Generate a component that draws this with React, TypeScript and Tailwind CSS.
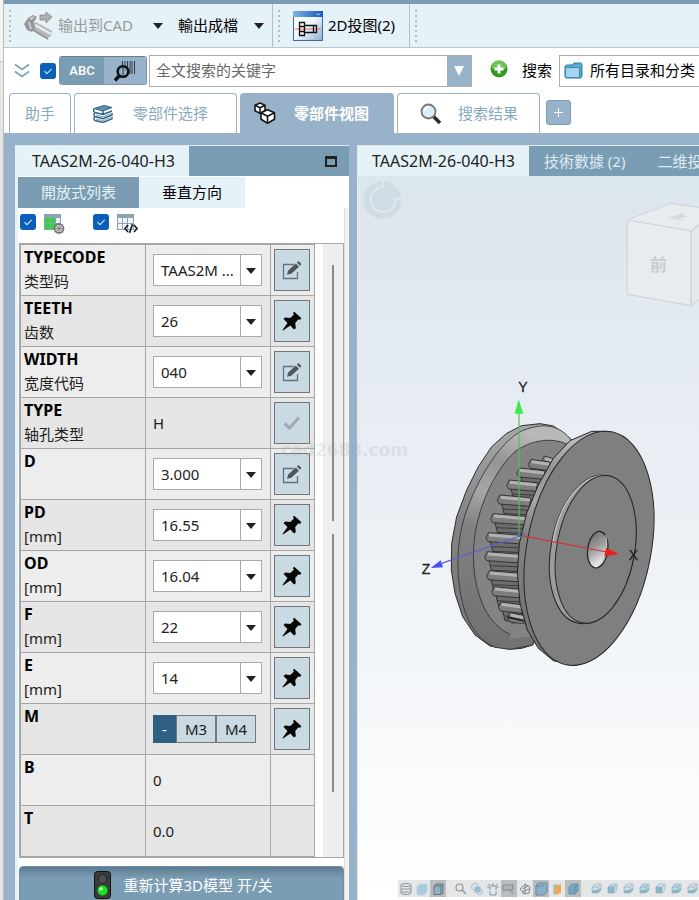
import React from "react";

type Action = "edit" | "pin" | "check";

interface Param {
  name: string;
  sub?: string;
  value: string;
  kind: "select" | "text" | "choice";
  action?: Action;
}

const params: Param[] = [
  { name: "TYPECODE", sub: "类型码", value: "TAAS2M ...", kind: "select", action: "edit" },
  { name: "TEETH", sub: "齿数", value: "26", kind: "select", action: "pin" },
  { name: "WIDTH", sub: "宽度代码", value: "040", kind: "select", action: "edit" },
  { name: "TYPE", sub: "轴孔类型", value: "H", kind: "text", action: "check" },
  { name: "D", value: "3.000", kind: "select", action: "edit" },
  { name: "PD", sub: "[mm]", value: "16.55", kind: "select", action: "pin" },
  { name: "OD", sub: "[mm]", value: "16.04", kind: "select", action: "pin" },
  { name: "F", sub: "[mm]", value: "22", kind: "select", action: "pin" },
  { name: "E", sub: "[mm]", value: "14", kind: "select", action: "pin" },
  { name: "M", value: "-", kind: "choice", action: "pin" },
  { name: "B", value: "0", kind: "text" },
  { name: "T", value: "0.0", kind: "text" },
];

function Handle() {
  return (
    <svg width="4" height="34" viewBox="0 0 4 34" className="shrink-0">
      {[1, 6, 11, 16, 21, 26, 31].map((y) => (
        <rect key={y} x="1" y={y} width="2" height="2" fill="#b3bcc4" />
      ))}
    </svg>
  );
}

function Caret({ color = "#222" }: { color?: string }) {
  return (
    <svg width="10" height="6" viewBox="0 0 10 6" className="shrink-0">
      <path d="M0 0h10L5 6z" fill={color} />
    </svg>
  );
}

function Check({ label }: { label: string }) {
  return (
    <label className="relative block h-4 w-4 shrink-0">
      <input
        type="checkbox"
        defaultChecked
        aria-label={label}
        className="block h-4 w-4 appearance-none rounded-[3px] bg-[#0a5fb8]"
      />
      <svg viewBox="0 0 16 16" className="pointer-events-none absolute inset-0 h-4 w-4">
        <path d="M4.500 8.200l2.400 2.400 4.800-4.800" fill="none" stroke="#cfe6f7" strokeWidth="1.100" />
      </svg>
    </label>
  );
}

function BoltIcon() {
  return (
    <svg width="30" height="30" viewBox="0 0 30 30" className="shrink-0">
      <path d="M8 14l4-3 16 9-1 5-3 2L9 19z" fill="#b5b8ba" />
      <path d="M11 14l16 9" stroke="#ececec" strokeWidth="2.500" />
      <path d="M9 19l15 9" stroke="#8d9092" strokeWidth="1.500" />
      <path d="M4 7l5-3 4 2-3 5 1 6-3 4-5-2-3-6z" fill="#96999c" />
      <path d="M6 8l4-2M5 11l2 7" stroke="#d8d8d8" strokeWidth="1.500" />
      <path d="M16 4h6V1l6 5-6 6V9h-6z" fill="#b0b0b0" stroke="#888" strokeWidth="0.800" />
    </svg>
  );
}

function DrawingIcon() {
  return (
    <svg width="30" height="30" viewBox="0 0 30 30" className="shrink-0">
      <defs>
        <linearGradient id="dw" x1="0" y1="0" x2="1" y2="1">
          <stop offset="0" stopColor="#ffffff" />
          <stop offset="0.5" stopColor="#f2f5f9" />
          <stop offset="1" stopColor="#8eabd0" />
        </linearGradient>
        <linearGradient id="dt" x1="0" y1="0" x2="1" y2="0">
          <stop offset="0" stopColor="#7db2ea" />
          <stop offset="1" stopColor="#145bb8" />
        </linearGradient>
      </defs>
      <rect x="0.500" y="0.500" width="29" height="29" fill="url(#dw)" stroke="#3c6ca6" />
      <rect x="0" y="0" width="30" height="6" fill="url(#dt)" />
      <path d="M24 2.500l1.500 1.500 1.500-1.500" stroke="#fff" fill="none" />
      <path d="M2 18h26" stroke="#f06464" />
      <path d="M6.500 11.500h5v13h-5zM11.500 14.500h12v7h-12M20.500 14.500v7M6.500 15.500h5M6.500 20.500h5" fill="none" stroke="#111" strokeWidth="1.300" />
    </svg>
  );
}

function BarcodeIcon() {
  return (
    <svg width="22" height="22" viewBox="0 0 22 22">
      <path d="M8.500 1v8M11 1v10M13.500 1v13M16 1v13M18 1v13M20.500 1v13" stroke="#2b3a44" strokeWidth="1" />
      <circle cx="9" cy="11.500" r="5.300" fill="#9ab4c8" fillOpacity="0.600" stroke="#111" strokeWidth="2.600" />
      <path d="M9 8v7" stroke="#2b3a44" />
      <path d="M5.500 15.500L1 20.500" stroke="#111" strokeWidth="3.400" />
    </svg>
  );
}

function BooksIcon() {
  return (
    <svg width="20" height="18" viewBox="0 0 20 18" className="shrink-0">
      <path d="M1 3.500L11 .500l8 2-9 3.500z" fill="#5f8fae" stroke="#2f6180" />
      <path d="M1 3.500c-1 2 0 3.500 1 4l8 2 9-3.500M10 6v3" fill="none" stroke="#2f6180" strokeWidth="1.400" />
      <path d="M1.500 8c-1 1.500-.5 3 .5 3.500l8 2.200 9-3.700v-2M1.500 12c-1 1.500-.5 3 .5 3.500l8 2 9-3.700v-2" fill="none" stroke="#2f6180" strokeWidth="1.400" />
      <path d="M3 10l7 1.800 9-3.600M3 14l7 1.800 9-3.600" fill="none" stroke="#8db0c6" strokeWidth="1.200" />
    </svg>
  );
}

function CubesIcon() {
  return (
    <svg width="22" height="22" viewBox="0 0 22 22" className="shrink-0" stroke="#151515" strokeWidth="1.600" strokeLinejoin="round" fill="#fff">
      <path d="M6 1l5 2.200v5.500l-5 2.700-5-2.700V3.200z" />
      <path d="M1 3.200l5 2.500 5-2.500M6 5.700v5.500" fill="none" />
      <path d="M13.500 7.800l7 3v6.500l-7 3.900-6.500-3.900v-6.500z" />
      <path d="M7 10.800l6.500 3.400 7-3.400M13.500 14.200v7" fill="none" />
    </svg>
  );
}

function LensIcon() {
  return (
    <svg width="22" height="22" viewBox="0 0 22 22" className="shrink-0">
      <path d="M13.500 13.500l6.500 6.500" stroke="#2a2a2a" strokeWidth="3.600" />
      <circle cx="8.500" cy="8.500" r="7" fill="#d9ecfa" stroke="#777" strokeWidth="1.800" />
      <path d="M4.500 8a4.500 4.500 0 014-4" stroke="#fff" strokeWidth="2" fill="none" />
    </svg>
  );
}

function ActionIcon({ kind }: { kind: Action }) {
  if (kind === "pin")
    return (
      <svg width="20" height="20" viewBox="0 0 20 20">
        <path d="M12.200.800L19.500 7.200l-1.500 1.600-1.800-.2-3 3.400.6 5.200-1.800 1.200-3.700-4L1 19.500.500 19l5-7L1.500 8l1.700-1.500 5 .6 3.600-3.300-.8-1.900z" fill="#050505" />
      </svg>
    );
  if (kind === "check")
    return (
      <svg width="18" height="14" viewBox="0 0 18 14">
        <path d="M1.500 7.500l5 4.500L16 1.500" fill="none" stroke="#a3abb0" strokeWidth="3.200" />
      </svg>
    );
  return (
    <svg width="20" height="20" viewBox="0 0 20 20">
      <path d="M12 4.500H1.500v14h14V12" fill="none" stroke="#6a7278" strokeWidth="1.300" />
      <path d="M5 14.800l1.200-4.300 7.600-7 3.200 3.200-7.700 7z" fill="#50575c" />
      <path d="M14.800 2.600L16.500 1l3 3-1.600 1.700z" fill="#50575c" />
    </svg>
  );
}

function ValueCell({ p }: { p: Param }) {
  if (p.kind === "text") return <span className="text-[15px]">{p.value}</span>;
  if (p.kind === "choice")
    return (
      <div className="flex h-7 text-[15px]">
        <button className="w-[23px] bg-[#2f5f83] text-white">-</button>
        <button className="w-10 border border-[#777] bg-[#c9dae3]">M3</button>
        <button className="w-10 border border-[#777] bg-[#c9dae3]">M4</button>
      </div>
    );
  return (
    <div className="relative h-8 w-[109px] border border-[#a9a9a9] bg-white">
      <select aria-label={p.name} className="h-full w-full appearance-none pl-[7px] text-[15px] outline-none">
        <option>{p.value}</option>
      </select>
      <span className="pointer-events-none absolute inset-y-0 right-0 flex w-[21px] items-center justify-center border-l border-[#a9a9a9] pt-[2px]">
        <Caret />
      </span>
    </div>
  );
}

function ParamTable() {
  return (
    <table className="w-[294px] table-fixed border-collapse text-[#222]">
      <colgroup>
        <col className="w-[125px]" />
        <col className="w-[125px]" />
        <col className="w-11" />
      </colgroup>
      <tbody>
        {params.map((p) => (
          <tr key={p.name} className="h-[51px] bg-[#ededed] even:bg-[#e6e6e6]">
            <th scope="row" className="border border-[#a6a6a6] p-0 pl-[3px] text-left align-top font-normal">
              <div className="text-base leading-6 font-bold text-black">{p.name}</div>
              {p.sub && <div className="text-[15px] leading-6">{p.sub}</div>}
            </th>
            <td className="border border-[#a6a6a6] p-0 pl-[7px] align-middle">
              <ValueCell p={p} />
            </td>
            <td className="border border-[#a6a6a6] p-0 pl-[3px] align-middle">
              {p.action && (
                <button
                  aria-label={p.action}
                  className="flex h-[42px] w-9 items-center justify-center border border-[#70777c] bg-[#c9dae3]"
                >
                  <ActionIcon kind={p.action} />
                </button>
              )}
            </td>
          </tr>
        ))}
      </tbody>
    </table>
  );
}

const teeth = [
  [395, 258, 430], [355, 268, 418], [320, 294, 402], [290, 330, 380], [262, 375, 360], [242, 431, 350],
  [228, 488, 338], [224, 545, 334], [230, 602, 332], [245, 650, 334], [265, 696, 336], [292, 728, 342],
];

function Scene() {
  return (
    <svg width="341" height="724" viewBox="358 176 341 724" className="absolute top-0 left-0" fontFamily="'Liberation Sans','Noto Sans CJK SC',sans-serif">
      <defs>
        <linearGradient id="bev" x1="0.400" y1="0" x2="0.200" y2="1">
          <stop offset="0" stopColor="#b8b8b8" />
          <stop offset="0.160" stopColor="#959595" />
          <stop offset="0.320" stopColor="#a6a6a6" />
          <stop offset="0.480" stopColor="#828282" />
          <stop offset="1" stopColor="#707070" />
        </linearGradient>
        <linearGradient id="rim" x1="0" y1="0" x2="0" y2="1">
          <stop offset="0" stopColor="#a8a8a8" />
          <stop offset="0.400" stopColor="#858585" />
          <stop offset="1" stopColor="#757575" />
        </linearGradient>
        <linearGradient id="bore" x1="0" y1="0" x2="0.500" y2="1">
          <stop offset="0" stopColor="#666" />
          <stop offset="0.500" stopColor="#999" />
          <stop offset="1" stopColor="#eee" />
        </linearGradient>
      </defs>

      <circle cx="382.500" cy="200" r="19" fill="#d1dce4" />
      <path d="M383 187a12.500 12.500 0 1 0 12.500 12.500M383 181v7M394 199h8" fill="none" stroke="#e3eaf0" strokeWidth="1.500" />

      <g stroke="#d0d5d8" strokeWidth="1.200" strokeLinejoin="round">
        <path d="M627.300 220l43.400-16.700 46 6.500-25.400 21.200z" fill="#e8ecee" />
        <path d="M627.300 220l64 11v74.700l-64-11.400z" fill="#e8ecee" />
        <path d="M691.300 231l26-21v76l-26 19.700z" fill="#e4e9eb" />
      </g>
      <path d="M668 218l14-5 6 4-8 1 6 3z" fill="#d6dbde" />
      <text x="650" y="271" fontSize="17" fontWeight="700" fill="#c8cdd0">前</text>

      <g transform="translate(410 370) scale(0.33333)" strokeLinejoin="round">
        <path d="M485 210L455 185L430 168L390 161L335 167L290 190L245 230L205 290L170 360L140 440L125 520L124 600L135 670L158 740L195 795L240 828L300 838L335 835L368 825L520 500Z" fill="url(#rim)" stroke="#2b2b2b" strokeWidth="3" />
        <path d="M485 212C450 165 400 155 335 183C270 215 200 330 165 435C135 530 138 640 165 725C185 780 215 815 255 832L300 838L368 825L500 500Z" fill="url(#bev)" stroke="#333" strokeWidth="2.500" />
        <path d="M470 222C420 200 360 212 315 245C250 305 200 420 192 520C185 600 200 690 245 750C280 790 315 806 356 800L480 500Z" fill="#838383" stroke="#2f2f2f" strokeWidth="2.500" />
        {teeth.map(([x, y, r]) => (
          <g key={y} stroke="#262626" strokeWidth="2.500">
            <path d={`M${x + 12} ${y + 22}L${x + 20} ${y + 56}L${r} ${y + 60}L${r} ${y + 16}Z`} fill="#6c6c6c" />
            <path d={`M${x + 8} ${y}L${r} ${y + 8}L${r} ${y + 34}L${x + 6} ${y + 27}L${x} ${y + 16}Z`} fill="#7e7e7e" />
            <path d={`M${x + 10} ${y + 7}L${r} ${y + 15}`} stroke="#b2b2b2" strokeWidth="9" />
            <path d={`M${x + 18} ${y + 42}L${r} ${y + 46}`} stroke="#3c3c3c" strokeWidth="3" />
          </g>
        ))}
        <path d="M304 762L300 806L356 802L400 760Z" fill="#838383" />
        <path d="M294 742L340 752" stroke="#262626" strokeWidth="6" />
        <path d="M590 184L545 184L480 212L430 265L385 345L350 430L328 520L322 610L330 700L352 780L385 835L430 872L495 886L560 600Z" fill="url(#bev)" stroke="#222" strokeWidth="3" />
        <ellipse cx="537" cy="535" rx="186" ry="356" transform="rotate(11 537 535)" fill="#7f7f7f" stroke="#252525" strokeWidth="3" />
        <ellipse cx="548" cy="538" rx="125" ry="226" transform="rotate(11 548 538)" fill="#9c9c9c" stroke="#262626" strokeWidth="3" />
        <path d="M585 316C510 315 445 410 429 515" stroke="#c4c4c4" strokeWidth="4" fill="none" />
        <ellipse cx="557" cy="538" rx="117" ry="224" transform="rotate(10 557 538)" fill="#7f7f7f" stroke="#262626" strokeWidth="3" />
        <ellipse cx="563" cy="539" rx="30" ry="55" transform="rotate(8 563 539)" fill="url(#bore)" stroke="#262626" strokeWidth="4" />
        <path d="M587 495C596 530 586 575 560 592" fill="none" stroke="#c8c8c8" strokeWidth="3" />

        <path d="M327 125V495" stroke="#4fc25a" strokeWidth="3.500" />
        <path d="M326 88L340 131H314Z" fill="#3bea4d" />
        <path d="M335 497L590 546" stroke="#cf3434" strokeWidth="3.500" />
        <path d="M588 534L627 552L583 559Z" fill="#ee1c1c" />
        <path d="M330 498L95 580" stroke="#5f60d8" strokeWidth="3.500" />
        <path d="M62 594L92 571L99 592Z" fill="#4c4cff" />
        <circle cx="334" cy="492" r="9" fill="none" stroke="#4b7684" strokeWidth="3" />
        <g fontSize="42" fill="#222" stroke="#222" strokeWidth="1">
          <text x="325" y="65">Y</text>
          <text x="656" y="569">X</text>
          <text x="35" y="612">Z</text>
        </g>
      </g>
    </svg>
  );
}

function CubeGlyph({ v }: { v: number }) {
  return (
    <>
      <path d="M4 6l3-3h6v6l-3 3H4z" fill={v % 2 ? "#d3e0e7" : "#bdd6e2"} stroke="#a3b8c4" strokeWidth="0.800" />
      <path d="M4 6h6v6M10 6l3-3" fill="none" stroke="#97afbd" strokeWidth="0.800" />
      <path d={v % 3 ? "M4 9h6l3-2v2l-3 3H4z" : "M4 6h6v6H4z"} fill="#8ab6cc" />
    </>
  );
}

function ToolGlyph({ i }: { i: number }) {
  const grey = "#8d9499";
  switch (i) {
    case 0:
      return <path d="M3 4c0-2 10-2 10 0v8c0 2-10 2-10 0zM3 4c0 2 10 2 10 0M3 8h10M3 11h10" fill="none" stroke={grey} />;
    case 1:
      return <path d="M3 5l3-2h7v8l-3 3H3z" fill="#a8cbdc" stroke="#bfd5e0" />;
    case 2:
      return <path d="M4 5l2-2h7v9l-2 1.500H4zM4 5h7v8M11 5l2-2" fill="#8fb3c6" stroke="#66757e" />;
    case 3:
      return <path d="M9 9l4 4M10 6.500a3.500 3.500 0 11-7 0 3.500 3.500 0 017 0" fill="none" stroke={grey} strokeWidth="1.200" />;
    case 4:
      return (
        <g stroke="#a3bfce">
          <circle cx="6" cy="6" r="3.500" fill="none" />
          <rect x="6" y="6" width="5" height="5" fill="#8dbad3" />
          <circle cx="10.500" cy="10.500" r="3" fill="none" />
        </g>
      );
    case 5:
      return <path d="M8 2v3M3 3l3 2h4l3-2M2 6h3v3M14 6h-3v3M5 10v4h6v-4" fill="none" stroke="#7f9aaa" />;
    case 6:
      return <path d="M2 4h10v5H2zM8 9l5 4" fill="#aeb4b7" stroke="#80888d" />;
    case 7:
      return <path d="M3 8l5-5 5 3-1 6-5 1zM5 8l6-3M5 11l7-3M8 3v10" fill="none" stroke="#80888d" />;
    case 8:
      return <path d="M3 4l3-2h8v9l-3 3H3zM3 5h8" fill="#86b0c7" stroke="#6f8a99" />;
    case 9:
      return (
        <g>
          <path d="M4 4l4-2v10l-4 2z" fill="#a9c6d6" />
          <path d="M6 5l6-2v9l-6 2z" fill="#f2a94e" />
        </g>
      );
    default:
      return <path d="M4 6l3-3h6v7l-3 3H4zM10 6v7M10 6l3-3" fill="#78a6bf" stroke="#648fa6" />;
  }
}

function ViewBar() {
  const pressed = [2, 6, 8, 10];
  const tools = [[0, 1, 2], [3, 4, 5, 6, 7, 8, 9, 10], [11, 12, 13, 14, 15, 16, 17]];
  return (
    <div className="relative mt-auto mb-[3px] ml-10 flex h-[17px] gap-[7px] overflow-hidden bg-[#e4e6e7]">
      {tools.map((group, g) => (
        <div key={g} className="flex shrink-0">
          {group.map((i) => (
            <button key={i} aria-label={`view ${i}`} className={pressed.includes(i) ? "w-4 bg-[#b9bdc0]" : "w-4"}>
              <svg width="16" height="16" viewBox="0 0 16 16">
                {i < 11 ? <ToolGlyph i={i} /> : <CubeGlyph v={i} />}
              </svg>
            </button>
          ))}
        </div>
      ))}
    </div>
  );
}

export default function App() {
  return (
    <div className="relative flex h-screen overflow-hidden bg-white font-['Noto_Sans','Noto_Sans_CJK_SC',sans-serif] text-[15px] text-black">
      <div className="flex w-1 shrink-0 flex-col border-r border-[#bdbdbd] bg-[#e8e6e4]">
        <div className="h-[62px] border-b border-[#cfcfcf] bg-[#f3f3f3]" />
      </div>

      <div className="flex min-w-0 flex-1 flex-col">
        <header className="flex h-12 shrink-0 items-center overflow-hidden border-t-4 border-b border-t-[#7b9db3] border-b-[#bcc6cd] bg-[#e5f2f7] whitespace-nowrap">
          <div className="flex h-full w-[269px] shrink-0 items-center border-r border-[#b5bec5] pl-1">
            <Handle />
            <button className="ml-3 flex items-center gap-1 text-[#999]">
              <BoltIcon />
              输出到CAD
            </button>
            <button aria-label="CAD" className="ml-5"><Caret /></button>
            <button className="ml-[15px]">輸出成檔</button>
            <button aria-label="檔" className="ml-4"><Caret /></button>
          </div>
          <div className="flex h-full w-[137px] shrink-0 items-center border-r border-[#b5bec5] pl-1">
            <Handle />
            <button className="ml-3 flex items-center gap-[5px]">
              <DrawingIcon />
              2D投图(2)
            </button>
          </div>
          <div className="pl-1"><Handle /></div>
        </header>

        <div className="flex h-[45px] shrink-0 items-center overflow-hidden pl-[10px] whitespace-nowrap">
          <button aria-label="展开" className="shrink-0">
            <svg width="16" height="16" viewBox="0 0 16 16" fill="none" stroke="#7ba3ba" strokeWidth="1.800">
              <path d="M1 1.500l7 5 7-5M1 8.500l7 5 7-5" />
            </svg>
          </button>
          <div className="ml-[10px]"><Check label="全文搜索" /></div>
          <div className="ml-[3px] flex h-[29px] shrink-0 overflow-hidden rounded-[3px] border border-[#7795aa] border-t-[#5f7f95]">
            <button className="w-11 bg-[#7b9db3] font-['Roboto',sans-serif] text-[13px] font-medium text-white">ABC</button>
            <button aria-label="条码" className="flex w-[42px] items-center justify-center bg-[#98b3c9]"><BarcodeIcon /></button>
          </div>
          <div className="ml-[2px] flex h-8 min-w-0 flex-1 border border-[#adadad]">
            <input
              type="text"
              aria-label="全文搜索的关键字"
              placeholder="全文搜索的关键字"
              className="min-w-0 flex-1 pl-[6px] outline-none placeholder:text-[#686868]"
            />
            <button aria-label="历史" className="flex w-6 items-center justify-center bg-[#98b3c9]">
              <svg width="10" height="10" viewBox="0 0 10 10"><path d="M0 0h10L5 10z" fill="#fff" /></svg>
            </button>
          </div>
          <button aria-label="添加" className="ml-[18px] shrink-0 pb-1">
            <svg width="18" height="18" viewBox="0 0 18 18">
              <circle cx="9" cy="9" r="8.500" fill="#2f9a1e" />
              <path d="M1.500 8a7.500 7.500 0 0115 0c-4 2-11 2-15 0z" fill="#6cc455" />
              <path d="M9 4.500v9M4.500 9h9" stroke="#fff" strokeWidth="3" />
            </svg>
          </button>
          <label htmlFor="scope" className="ml-[14px] shrink-0">搜索</label>
          <div className="ml-[7px] flex h-8 w-[140px] shrink-0 items-center border border-r-0 border-[#adadad] pl-1">
            <svg width="20" height="17" viewBox="0 0 20 17" className="shrink-0">
              <path d="M1 15V4l2-1h5l2-2h7l1 2v11l-1 2H2z" fill="#5fa9cf" stroke="#2d7da6" />
              <path d="M1.500 5.500h14v10h-14z" fill="#a5d5ee" stroke="#3a89b1" />
            </svg>
            <select id="scope" className="ml-[6px] w-28 shrink-0 appearance-none outline-none">
              <option>所有目录和分类</option>
            </select>
          </div>
        </div>

        <nav className="flex h-10 shrink-0 gap-[3px] overflow-hidden pl-[5px] whitespace-nowrap text-[#87a9c0]">
          <button className="w-[62px] shrink-0 rounded-t border border-b-0 border-[#98b3c9]">助手</button>
          <button className="flex w-[163px] shrink-0 items-center gap-5 rounded-t border border-b-0 border-[#98b3c9] pl-[18px]">
            <BooksIcon />
            零部件选择
          </button>
          <button className="flex w-[154px] shrink-0 items-center gap-[18px] rounded-t bg-[#98b3c9] pl-[14px] font-bold text-white">
            <CubesIcon />
            零部件视图
          </button>
          <button className="flex w-[143px] shrink-0 items-center gap-4 rounded-t border border-b-0 border-[#98b3c9] pl-[22px]">
            <LensIcon />
            搜索结果
          </button>
          <button aria-label="新标签" className="mt-[7px] ml-[3px] flex h-[25px] w-[25px] shrink-0 items-center justify-center rounded-[3px] border border-[#7b9db3] bg-[#98b3c9]">
            <svg width="9" height="9" viewBox="0 0 9 9"><path d="M4.500 0v9M0 4.500h9" stroke="#fff" /></svg>
          </button>
        </nav>

        <main className="flex min-h-0 flex-1 gap-2 overflow-hidden bg-[#98b3c9] pt-3 pl-[11px]">
          <section className="flex w-[334px] shrink-0 flex-col overflow-hidden bg-white">
            <div className="flex h-[31px] shrink-0 items-center border-t border-[#dfebf2] bg-[#7b9db3] pr-3">
              <h2 className="flex h-full items-center bg-[#e5f2f7] pr-[14px] pl-[17px] text-base text-[#222]">TAAS2M-26-040-H3</h2>
              <button aria-label="最大化" className="ml-auto h-[11px] w-3 border-2 border-t-[3px] border-[#222]" />
            </div>
            <div className="flex min-h-0 flex-1 flex-col border-l-[3px] border-[#e5f2f7] pt-[1px]">
              <div className="flex h-[31px] shrink-0">
                <button className="w-[121px] bg-[#7b9db3] text-[#e8f2f8]">開放式列表</button>
                <button className="w-[106px] bg-[#e5f2f7]">垂直方向</button>
              </div>
              <div className="flex min-h-0 flex-1">
                <div className="flex min-w-0 flex-1 flex-col pl-[1px]">
                  <div className="flex h-[35px] shrink-0 items-start pt-[6px] pl-[1px]">
                    <Check label="表格设置" />
                    <svg width="21" height="20" viewBox="0 0 21 20" className="ml-2">
                      <rect width="17" height="16" fill="#8ba3b2" />
                      <path d="M1 4h5v5H1zM7 4h4v5H7zM1 10h5v5H1zM7 10h4v5H7z" fill="#2fd43c" />
                      <path d="M12 4h4v5h-4zM12 10h4v5h-4z" fill="#e8f1f5" />
                      <circle cx="15" cy="14.500" r="4.500" fill="#d4d4d4" stroke="#6f6f6f" strokeWidth="1.500" />
                      <path d="M15 9v11M9.500 14.500h11M11 10.500l8 8M19 10.500l-8 8" stroke="#777" strokeWidth="0.800" />
                    </svg>
                    <div className="ml-7"><Check label="表格代码" /></div>
                    <svg width="21" height="20" viewBox="0 0 21 20" className="ml-2">
                      <rect width="17" height="16" fill="#8ba3b2" />
                      <path d="M1 4h4v5H1zM6 4h4v5H6zM11 4h5v5h-5zM1 10h4v5H1zM6 10h4v5H6zM11 10h5v5h-5z" fill="#eef4f7" />
                      <path d="M11 11l-3 3.500 3 3.500M17 11l3 3.500-3 3.500M15.500 10l-3 9" fill="none" stroke="#222" strokeWidth="1.700" />
                    </svg>
                  </div>
                  <div className="flex shrink-0 border border-[#a6a6a6]">
                    <ParamTable />
                    <div className="ml-auto flex w-5 flex-col items-center gap-[13px] bg-[#eee] pt-[21px]">
                      <div className="h-64 w-[2px] bg-[#8b8b8b]" />
                      <div className="h-[258px] w-[2px] bg-[#8b8b8b]" />
                    </div>
                  </div>
                  <button className="mt-2 flex h-[38px] shrink-0 items-center justify-center gap-3 rounded border border-[#6d8ea5] bg-linear-to-b from-[#5b7b91] via-[#7b9db3] via-30% to-[#7b9db3] pl-1 text-white">
                    <svg width="17" height="28" viewBox="0 0 17 28">
                      <rect x="0.500" y="0.500" width="16" height="27" rx="3" fill="#3c3c3c" stroke="#111" />
                      <circle cx="8.500" cy="8" r="4.500" fill="#4e4e4e" stroke="#222" />
                      <circle cx="8.500" cy="19.500" r="5" fill="#19e524" />
                      <circle cx="7" cy="18" r="1.800" fill="#b5ffb0" />
                    </svg>
                    重新计算3D模型 开/关
                  </button>
                </div>
                <div className="w-[5px] shrink-0 border-l border-[#ddd] bg-[#f1f1f1]" />
              </div>
            </div>
          </section>

          <section className="flex min-w-0 flex-1 flex-col border-l border-[#dfebf2]">
            <div className="flex h-[31px] shrink-0 overflow-hidden border-t border-[#dfebf2] bg-[#7b9db3] whitespace-nowrap text-[#dcebf4]">
              <button className="shrink-0 bg-[#e5f2f7] px-[14px] text-base text-[#222]">TAAS2M-26-040-H3</button>
              <button className="shrink-0 px-[15px]">技術數據 (2)</button>
              <button className="shrink-0 px-[17px]">二维投</button>
            </div>
            <div className="relative flex min-h-0 flex-1 flex-col overflow-hidden bg-linear-to-b from-[#dce6ed] via-[#e5ebf2] via-27% to-white">
              <Scene />
              <ViewBar />
            </div>
          </section>
        </main>
      </div>

      <div className="pointer-events-none absolute top-[438px] left-[281px] font-['DejaVu_Sans',sans-serif] text-[17px] font-bold text-[#9aa0a6]/20">
        cad2688.com
      </div>
    </div>
  );
}
